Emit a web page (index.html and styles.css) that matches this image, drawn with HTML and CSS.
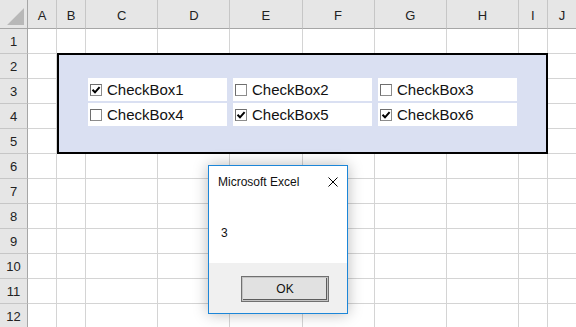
FILE: index.html
```html
<!DOCTYPE html>
<html lang="en">
<head>
    <meta charset="UTF-8">
    <meta name="viewport" content="width=device-width, initial-scale=1.0">
    <title>Microsoft Excel - CheckBox</title>
    <link rel="stylesheet" href="styles.css">
</head>
<body>

<div class="workbook">
    <table class="sheet">
        <colgroup>
            <col class="col-head">
            <col class="col-narrow">
            <col class="col-narrow">
            <col class="col-wide">
            <col class="col-wide">
            <col class="col-wide">
            <col class="col-wide">
            <col class="col-wide">
            <col class="col-wide">
            <col class="col-narrow">
            <col class="col-narrow">
        </colgroup>
        <thead>
            <tr>
                <th class="corner"></th>
                <th>A</th><th>B</th><th>C</th><th>D</th><th>E</th>
                <th>F</th><th>G</th><th>H</th><th>I</th><th>J</th>
            </tr>
        </thead>
        <tbody>
            <tr><th>1</th><td></td><td></td><td></td><td></td><td></td><td></td><td></td><td></td><td></td><td></td></tr>
            <tr><th>2</th><td></td><td></td><td></td><td></td><td></td><td></td><td></td><td></td><td></td><td></td></tr>
            <tr><th>3</th><td></td><td></td><td></td><td></td><td></td><td></td><td></td><td></td><td></td><td></td></tr>
            <tr><th>4</th><td></td><td></td><td></td><td></td><td></td><td></td><td></td><td></td><td></td><td></td></tr>
            <tr><th>5</th><td></td><td></td><td></td><td></td><td></td><td></td><td></td><td></td><td></td><td></td></tr>
            <tr><th>6</th><td></td><td></td><td></td><td></td><td></td><td></td><td></td><td></td><td></td><td></td></tr>
            <tr><th>7</th><td></td><td></td><td></td><td></td><td></td><td></td><td></td><td></td><td></td><td></td></tr>
            <tr><th>8</th><td></td><td></td><td></td><td></td><td></td><td></td><td></td><td></td><td></td><td></td></tr>
            <tr><th>9</th><td></td><td></td><td></td><td></td><td></td><td></td><td></td><td></td><td></td><td></td></tr>
            <tr><th>10</th><td></td><td></td><td></td><td></td><td></td><td></td><td></td><td></td><td></td><td></td></tr>
            <tr><th>11</th><td></td><td></td><td></td><td></td><td></td><td></td><td></td><td></td><td></td><td></td></tr>
            <tr><th>12</th><td></td><td></td><td></td><td></td><td></td><td></td><td></td><td></td><td></td><td></td></tr>
        </tbody>
    </table>

    <!-- shape holding the six form checkboxes -->
    <div class="frame">
        <label class="check-item"><span class="box checked"><svg viewBox="0 0 10 10"><path d="M1.5 4.8 L4 7.3 L8.6 2.2"/></svg></span>CheckBox1</label>
        <label class="check-item"><span class="box"></span>CheckBox2</label>
        <label class="check-item"><span class="box"></span>CheckBox3</label>
        <label class="check-item"><span class="box"></span>CheckBox4</label>
        <label class="check-item"><span class="box checked"><svg viewBox="0 0 10 10"><path d="M1.5 4.8 L4 7.3 L8.6 2.2"/></svg></span>CheckBox5</label>
        <label class="check-item"><span class="box checked"><svg viewBox="0 0 10 10"><path d="M1.5 4.8 L4 7.3 L8.6 2.2"/></svg></span>CheckBox6</label>
    </div>

    <!-- MsgBox -->
    <div class="dialog">
        <div class="dialog-title">
            <span>Microsoft Excel</span>
            <svg class="close" viewBox="0 0 10 10"><path d="M0.5 0.5 L9.5 9.5 M9.5 0.5 L0.5 9.5"/></svg>
        </div>
        <div class="dialog-body">3</div>
        <div class="dialog-footer">
            <button class="ok-btn">OK</button>
        </div>
    </div>
</div>

</body>
</html>
```

FILE: styles.css
```css
body {
    margin: 0;
    padding: 0;
    background-color: white;
    font-family: "Liberation Sans", Arial, sans-serif;
    overflow: hidden;
}

.workbook {
    position: relative;
    width: 576px;
    height: 327px;
    overflow: hidden;
}

/* grid */
.sheet {
    border-collapse: separate;
    border-spacing: 0;
    table-layout: fixed;
    width: 577px;
}

.col-head { width: 28px; }
.col-narrow { width: 29px; }
.col-wide { width: 72px; }

.sheet th,
.sheet td {
    box-sizing: border-box;
    padding: 0;
    border-right: 1px solid #d4d4d4;
    border-bottom: 1px solid #d4d4d4;
    height: 25px;
}

.sheet thead th {
    height: 29px;
    background-color: #e6e6e6;
    border-right: 1px solid #c6c6c6;
    border-bottom: 1px solid #a6a6a6;
    font-weight: normal;
    font-size: 13px;
    color: #222;
    text-align: center;
    padding-top: 3px;
}

.sheet tbody th {
    background-color: #e6e6e6;
    border-right: 1px solid #a6a6a6;
    border-bottom: 1px solid #c6c6c6;
    font-weight: normal;
    font-size: 13px;
    color: #222;
    text-align: center;
}

.sheet thead th.corner {
    position: relative;
    border-right: 1px solid #a6a6a6;
}

.corner::after {
    content: "";
    position: absolute;
    right: 3px;
    bottom: 3px;
    width: 17px;
    height: 17px;
    background-color: #b8b8b8;
    clip-path: polygon(100% 0, 100% 100%, 0 100%);
}

/* shape with checkboxes */
.frame {
    position: absolute;
    left: 57px;
    top: 53px;
    width: 491px;
    height: 101px;
    box-sizing: border-box;
    border: 2px solid black;
    background-color: #dae0f2;
    padding: 23px 0 0 29px;
    display: grid;
    grid-template-columns: repeat(3, 139px);
    grid-auto-rows: 23px;
    column-gap: 6px;
    row-gap: 2px;
}

.check-item {
    display: flex;
    align-items: center;
    background-color: white;
    font-size: 15px;
    color: #111;
    padding-left: 2px;
}

.box {
    width: 12px;
    height: 12px;
    box-sizing: border-box;
    border: 1px solid #8c8c8c;
    border-top-color: #6e6e6e;
    border-left-color: #6e6e6e;
    background-color: white;
    margin-right: 5px;
    display: flex;
}

.box svg {
    width: 10px;
    height: 10px;
}

.box path {
    fill: none;
    stroke: black;
    stroke-width: 2;
}

/* message box */
.dialog {
    position: absolute;
    left: 208px;
    top: 165px;
    width: 140px;
    height: 149px;
    box-sizing: border-box;
    border: 1px solid #1c86d8;
    background-color: white;
    box-shadow: 0 0 14px rgba(0, 0, 0, 0.28);
    display: flex;
    flex-direction: column;
    font-size: 12px;
    color: #111;
}

.dialog-title {
    height: 30px;
    display: flex;
    align-items: center;
    justify-content: space-between;
    padding: 2px 9px 0 9px;
    box-sizing: border-box;
}

.close {
    width: 10px;
    height: 10px;
}

.close path {
    fill: none;
    stroke: black;
    stroke-width: 1;
}

.dialog-body {
    flex: 1;
    padding: 30px 0 0 12px;
}

.dialog-footer {
    height: 50px;
    background-color: #f0f0f0;
    padding: 13px 0 0 32px;
    box-sizing: border-box;
}

.ok-btn {
    width: 88px;
    height: 26px;
    box-sizing: border-box;
    border: 1px solid #707070;
    box-shadow: inset 0 0 0 1px #c4c4c4, inset -1px -1px 0 1px #5c5c5c;
    background-color: #e1e1e1;
    font-family: "Liberation Sans", Arial, sans-serif;
    font-size: 12px;
    color: #111;
    padding: 0;
}
```
